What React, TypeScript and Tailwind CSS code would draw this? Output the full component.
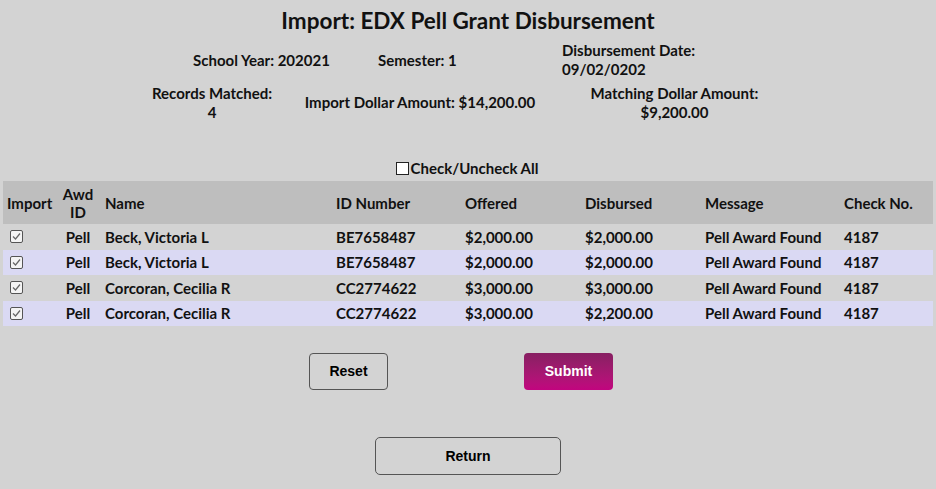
import React from "react";

const rows = [
  { awd: "Pell", name: "Beck, Victoria L", id: "BE7658487", offered: "$2,000.00", disbursed: "$2,000.00", msg: "Pell Award Found", check: "4187" },
  { awd: "Pell", name: "Beck, Victoria L", id: "BE7658487", offered: "$2,000.00", disbursed: "$2,000.00", msg: "Pell Award Found", check: "4187" },
  { awd: "Pell", name: "Corcoran, Cecilia R", id: "CC2774622", offered: "$3,000.00", disbursed: "$3,000.00", msg: "Pell Award Found", check: "4187" },
  { awd: "Pell", name: "Corcoran, Cecilia R", id: "CC2774622", offered: "$3,000.00", disbursed: "$2,200.00", msg: "Pell Award Found", check: "4187" },
];

function CheckBox({ checked }: { checked: boolean }) {
  return (
    <span className="inline-flex h-[13px] w-[13px] items-center justify-center rounded-[2px] border border-[#555] bg-[#f4f4f4]">
      {checked && (
        <svg width="11" height="11" viewBox="0 0 11 11">
          <path d="M2 5.5 L4.5 8 L9 2.5" fill="none" stroke="#666" strokeWidth="1.2" />
        </svg>
      )}
    </span>
  );
}

export default function App() {
  return (
    <div className="h-[489px] w-full bg-[#d3d3d3] text-[#111] font-['Lato',sans-serif] font-bold">
      <h1 className="pt-[7px] text-center text-[22.5px] leading-[28px] font-bold">
        Import: EDX Pell Grant Disbursement
      </h1>

      <div className="mt-[6px] flex text-[15px] leading-[19px]">
        <div className="ml-[193px] mt-[10px] w-[185px]">School Year: 202021</div>
        <div className="mt-[10px] w-[184px]">Semester: 1</div>
        <div className="w-[145px]">Disbursement Date: 09/02/0202</div>
      </div>

      <div className="mt-[5px] flex text-[15px] leading-[19px]">
        <div className="ml-[148px] w-[128px] text-center">Records Matched: 4</div>
        <div className="ml-[26px] mt-[9px] w-[236px] text-center">Import Dollar Amount: $14,200.00</div>
        <div className="ml-[49px] w-[175px] text-center">Matching Dollar Amount: $9,200.00</div>
      </div>

      <div className="mt-[37px] flex items-center justify-center pr-[2px] text-[15px] leading-[19px]">
        <span className="mr-[2px] inline-block h-[13px] w-[13px] border border-[#222] bg-white" />
        <span>Check/Uncheck All</span>
      </div>

      <table className="mx-[3px] mt-[3px] w-[930px] table-fixed border-collapse text-[15px] leading-[18px]">
        <colgroup>
          <col className="w-[52px]" />
          <col className="w-[46px]" />
          <col className="w-[231px]" />
          <col className="w-[129px]" />
          <col className="w-[120px]" />
          <col className="w-[120px]" />
          <col className="w-[139px]" />
          <col className="w-[93px]" />
        </colgroup>
        <thead>
          <tr className="h-[43px] bg-[#bebebe] text-left">
            <th className="pl-[4px] font-bold">Import</th>
            <th className="text-center font-bold">Awd<br />ID</th>
            <th className="pl-[4px] font-bold">Name</th>
            <th className="pl-[4px] font-bold">ID Number</th>
            <th className="pl-[4px] font-bold">Offered</th>
            <th className="pl-[4px] font-bold">Disbursed</th>
            <th className="pl-[4px] font-bold">Message</th>
            <th className="pl-[4px] font-bold">Check No.</th>
          </tr>
        </thead>
        <tbody>
          {rows.map((r, i) => (
            <tr key={i} className={i % 2 === 1 ? "h-[25.5px] bg-[#dad9f3]" : "h-[25.5px] bg-[#d3d3d3]"}>
              <td className="pl-[7px] align-middle">
                <span className="flex"><CheckBox checked /></span>
              </td>
              <td className="text-center">{r.awd}</td>
              <td className="pl-[4px]">{r.name}</td>
              <td className="pl-[4px]">{r.id}</td>
              <td className="pl-[4px]">{r.offered}</td>
              <td className="pl-[4px]">{r.disbursed}</td>
              <td className="pl-[4px]">{r.msg}</td>
              <td className="pl-[4px]">{r.check}</td>
            </tr>
          ))}
        </tbody>
      </table>

      <div className="mt-[27px] flex font-['Liberation_Sans',Arial,sans-serif] text-[14px]">
        <button className="ml-[309px] h-[37px] w-[79px] rounded-[4px] border border-[#555] bg-transparent font-bold text-black">
          Reset
        </button>
        <button className="ml-[136px] h-[37px] w-[89px] rounded-[4px] bg-gradient-to-b from-[#871f62] to-[#c2047f] font-bold text-white">
          Submit
        </button>
      </div>

      <div className="mt-[47px] flex font-['Liberation_Sans',Arial,sans-serif] text-[14px]">
        <button className="ml-[375px] h-[38px] w-[186px] rounded-[5px] border border-[#555] bg-transparent font-bold text-black">
          Return
        </button>
      </div>
    </div>
  );
}
